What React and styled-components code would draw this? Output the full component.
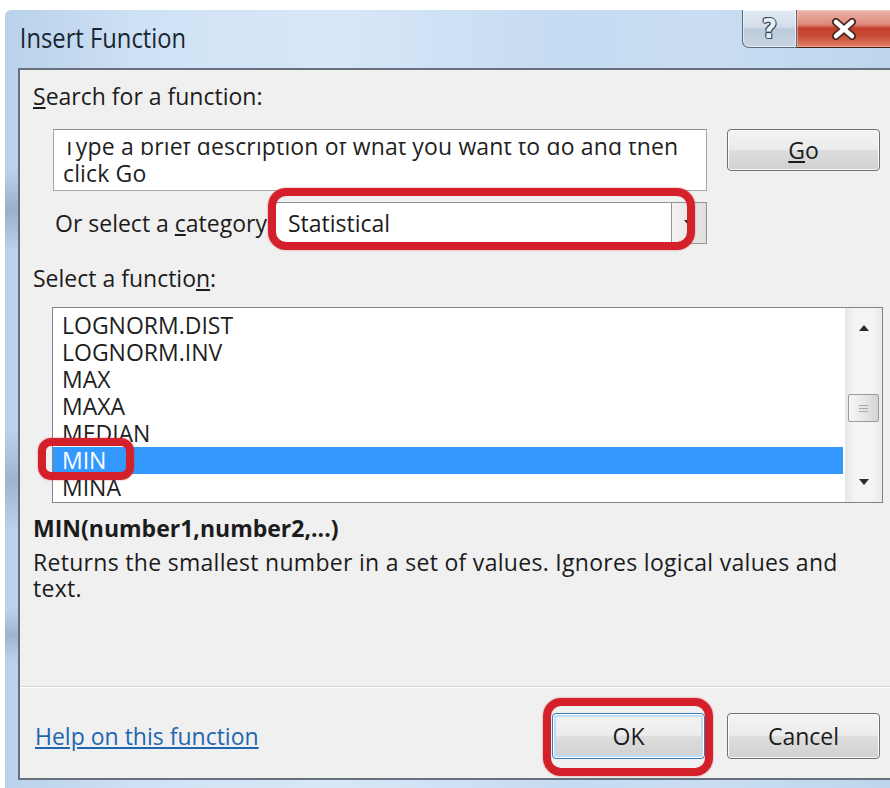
import React from "react";
import styled, { createGlobalStyle } from "styled-components";

const GlobalStyle = createGlobalStyle`
  html, body {
    margin: 0;
    padding: 0;
    background: #ffffff;
  }
  body {
    width: 890px;
    height: 788px;
    overflow: hidden;
  }
`;

const Screen = styled.div`
  width: 890px;
  height: 788px;
  overflow: hidden;
  box-sizing: border-box;
  padding: 10px 0 0 5px;
  background: #ffffff;
  font-family: "Open Sans", "Noto Sans", sans-serif;
  font-size: 23px;
  color: #1c1c1c;
`;

/* Aero glass frame around the dialog */
const Window = styled.div`
  width: 910px;
  height: 778px;
  box-sizing: border-box;
  padding: 0 13px 8px 13px;
  display: flex;
  flex-direction: column;
  border-radius: 6px 6px 0 0;
  background:
    linear-gradient(
      to bottom,
      rgba(90, 115, 145, 0) 0px,
      rgba(90, 115, 145, 0) 160px,
      rgba(90, 115, 145, 0.35) 200px,
      rgba(90, 115, 145, 0) 240px,
      rgba(90, 115, 145, 0) 420px,
      rgba(90, 115, 145, 0.3) 470px,
      rgba(90, 115, 145, 0) 520px,
      rgba(90, 115, 145, 0) 600px,
      rgba(90, 115, 145, 0.3) 625px,
      rgba(90, 115, 145, 0) 650px
    ),
    linear-gradient(
      to right,
      #b9d1ea 0px,
      #cfe2f5 140px,
      #d7e7f7 330px,
      #c5dbf1 560px,
      #c9def3 700px,
      #bcd4ec 100%
    );
`;

const TitleBar = styled.div`
  height: 58px;
  flex: none;
  display: flex;
  align-items: flex-start;
`;

const Title = styled.div`
  flex: 1;
  padding: 13px 0 0 2px;
  font-size: 27px;
  line-height: 30px;
  color: #1b2633;
  transform: scaleX(0.88);
  transform-origin: left center;
`;

const CaptionButtons = styled.div`
  display: flex;
  margin-right: 5px;
  height: 38px;
`;

const HelpCaption = styled.div`
  width: 55px;
  height: 38px;
  box-sizing: border-box;
  border: 1px solid #5b6b7e;
  border-top: none;
  border-radius: 0 0 0 7px;
  background: linear-gradient(
    to bottom,
    #e3ebf4 0%,
    #d2dde9 45%,
    #bccbdc 52%,
    #c6d3e2 100%
  );
  box-shadow: inset 0 0 0 1px rgba(255, 255, 255, 0.55);
  display: flex;
  align-items: center;
  justify-content: center;
  font-family: "DejaVu Sans", sans-serif;
  font-weight: bold;
  font-size: 26px;
  line-height: 1;
  color: #e9eff6;
  text-shadow:
    1px 0 0 #3a4a5c,
    -1px 0 0 #3a4a5c,
    0 1px 0 #3a4a5c,
    0 -1px 0 #3a4a5c,
    1px 1px 0 #3a4a5c,
    -1px -1px 0 #3a4a5c;
`;

const CloseCaption = styled.div`
  width: 100px;
  height: 38px;
  box-sizing: border-box;
  border: 1px solid #4a1a14;
  border-top: none;
  border-left: none;
  background: linear-gradient(
    to bottom,
    #eab4a8 0%,
    #de8c7c 38%,
    #c43f2a 50%,
    #c84a33 68%,
    #df8068 100%
  );
  box-shadow: inset 0 0 0 1px rgba(255, 220, 210, 0.45);
  display: flex;
  align-items: center;
  justify-content: center;
  padding-right: 6px;
`;

const Panel = styled.div`
  flex: 1;
  display: flex;
  flex-direction: column;
  border: 2px solid #66717d;
  background: #f0f0f0;
`;

const Content = styled.div`
  flex: 1;
  display: flex;
  flex-direction: column;
  padding: 12px 20px 0 13px;
`;

const Label = styled.div`
  line-height: 28px;
  height: 28px;
  margin-top: ${(p) => p.$top || 0}px;
  white-space: nowrap;
`;

const SearchRow = styled.div`
  display: flex;
  align-items: flex-start;
  gap: 20px;
  margin: 19px 0 0 20px;
`;

const SearchBox = styled.div`
  width: 655px;
  height: 62px;
  box-sizing: border-box;
  border: 1px solid #a3a7ad;
  border-top-color: #8d9196;
  background: #ffffff;
  padding: 12px 0 0 9px;
`;

/* the edit control is scrolled a little, so the first line loses its top */
const SearchViewport = styled.div`
  height: 48px;
  overflow: hidden;
`;

const SearchText = styled.div`
  margin-top: -9px;
  line-height: 27px;
  color: #1f1f1f;
  white-space: nowrap;
  letter-spacing: 0.15px;
`;

const PushButton = styled.button`
  width: 153px;
  height: ${(p) => p.$h || 46}px;
  box-sizing: border-box;
  border: 1px solid ${(p) => (p.$default ? "#3d7bad" : "#707070")};
  border-radius: 4px;
  background: linear-gradient(
    to bottom,
    #f3f3f3 0%,
    #ececec 48%,
    #dddddd 52%,
    #d0d0d0 100%
  );
  box-shadow: ${(p) =>
    p.$default
      ? "inset 0 0 0 1px #ffffff, inset 0 0 0 3px #b9def6"
      : "inset 0 0 0 1px rgba(255,255,255,0.85)"};
  font-family: inherit;
  font-size: 23px;
  color: #1c1c1c;
  padding: 0;
  display: flex;
  align-items: center;
  justify-content: center;
`;

const CategoryRow = styled.div`
  display: flex;
  align-items: center;
  height: 42px;
  margin: 11px 0 0 22px;
`;

const CategoryLabel = styled.div`
  width: 220px;
  white-space: nowrap;
`;

const Marked = styled.div`
  position: relative;
`;

/* hand-drawn red annotation ring */
const Ring = styled.div`
  position: absolute;
  top: ${(p) => p.$top}px;
  left: ${(p) => p.$left}px;
  width: ${(p) => p.$w}px;
  height: ${(p) => p.$h}px;
  box-sizing: border-box;
  border: 8px solid #d3202a;
  border-radius: ${(p) => p.$r || 16}px;
  pointer-events: none;
  box-shadow: 0 0 2px rgba(211, 32, 42, 0.6);
  z-index: 2;
`;

const Select = styled.div`
  width: 432px;
  height: 42px;
  box-sizing: border-box;
  border: 1px solid #8f959c;
  background: #ffffff;
  display: flex;
`;

const SelectValue = styled.div`
  flex: 1;
  padding-left: 12px;
  line-height: 40px;
`;

const DropButton = styled.div`
  width: 35px;
  box-sizing: border-box;
  border-left: 1px solid #8f959c;
  background: linear-gradient(to right, #f3f3f3, #dedede);
  display: flex;
  align-items: center;
  justify-content: center;
`;

const ListFrame = styled.div`
  position: relative;
  margin: 15px 0 0 19px;
  width: 831px;
`;

const ListBox = styled.div`
  height: 196px;
  box-sizing: border-box;
  border: 1px solid #7e858d;
  background: #ffffff;
  display: flex;
  overflow: hidden;
`;

const Items = styled.div`
  flex: 1;
  padding-top: 4px;
  overflow: hidden;
`;

const Item = styled.div`
  height: 27px;
  line-height: 27px;
  padding-left: 9px;
  margin-right: 2px;
  color: ${(p) => (p.$selected ? "#ffffff" : "#1e1e1e")};
  background: ${(p) => (p.$selected ? "#3399ff" : "transparent")};
`;

const ScrollBar = styled.div`
  width: 37px;
  display: flex;
  flex-direction: column;
  background: linear-gradient(to right, #e6e6e6, #f4f4f4 25%, #f4f4f4 75%, #e9e9e9);
`;

const ScrollArrow = styled.div`
  height: 40px;
  display: flex;
  align-items: center;
  justify-content: center;
`;

const ScrollTrack = styled.div`
  flex: 1;
`;

const Thumb = styled.div`
  margin: 46px auto 0;
  width: 31px;
  height: 28px;
  box-sizing: border-box;
  border: 1px solid #9b9b9b;
  border-radius: 2px;
  background: linear-gradient(to right, #f6f6f6, #e4e4e4 60%, #d4d4d4);
  display: flex;
  align-items: center;
  justify-content: center;
`;

const Grip = styled.div`
  width: 9px;
  height: 7px;
  background: repeating-linear-gradient(
    to bottom,
    #a9a9a9 0px,
    #a9a9a9 1px,
    transparent 1px,
    transparent 3px
  );
`;

const Signature = styled.div`
  margin-top: 11px;
  line-height: 28px;
  font-weight: bold;
`;

const Description = styled.div`
  margin-top: 7px;
  width: 835px;
  line-height: 26px;
  letter-spacing: 0.3px;
`;

const Spacer = styled.div`
  flex: 1;
`;

const Separator = styled.div`
  height: 1px;
  background: #d5d5d5;
  border-bottom: 1px solid #ffffff;
  margin: 0 -20px 0 -13px;
`;

const Footer = styled.div`
  height: 90px;
  box-sizing: border-box;
  padding-top: 6px;
  display: flex;
  align-items: center;
`;

const HelpLink = styled.a`
  margin-left: 2px;
  color: #1f66b0;
  text-decoration: underline;
  cursor: pointer;
`;

const ButtonGroup = styled.div`
  margin-left: auto;
  display: flex;
  gap: 22px;
`;

const functions = ["LOGNORM.DIST", "LOGNORM.INV", "MAX", "MAXA", "MEDIAN", "MIN", "MINA"];

const Triangle = ({ down }) => (
  <svg width="10" height="6" viewBox="0 0 10 6">
    <path d={down ? "M0 0 L10 0 L5 6 Z" : "M0 6 L10 6 L5 0 Z"} fill="#2a2a2a" />
  </svg>
);

export default function App() {
  return (
    <>
      <GlobalStyle />
      <Screen>
        <Window>
          <TitleBar>
            <Title>Insert Function</Title>
            <CaptionButtons>
              <HelpCaption>?</HelpCaption>
              <CloseCaption>
                <svg width="26" height="22" viewBox="0 0 26 22">
                  <path d="M5 4 L21 18 M21 4 L5 18" stroke="#4a2a24" strokeWidth="8" strokeLinecap="round" />
                  <path d="M5 4 L21 18 M21 4 L5 18" stroke="#ffffff" strokeWidth="4.5" strokeLinecap="round" />
                </svg>
              </CloseCaption>
            </CaptionButtons>
          </TitleBar>

          <Panel>
            <Content>
              <Label>
                <u>S</u>earch for a function:
              </Label>

              <SearchRow>
                <SearchBox>
                  <SearchViewport>
                    <SearchText>
                      Type a brief description of what you want to do and then
                      <br />
                      click Go
                    </SearchText>
                  </SearchViewport>
                </SearchBox>
                <PushButton $h={42}>
                  <u>G</u>o
                </PushButton>
              </SearchRow>

              <CategoryRow>
                <CategoryLabel>
                  Or select a <u>c</u>ategory:
                </CategoryLabel>
                <Marked>
                  <Select>
                    <SelectValue>Statistical</SelectValue>
                    <DropButton>
                      <Triangle down />
                    </DropButton>
                  </Select>
                  <Ring $top={-14} $left={-7} $w={427} $h={62} $r={18} />
                </Marked>
              </CategoryRow>

              <Label $top={20}>
                Select a functio<u>n</u>:
              </Label>

              <ListFrame>
                <ListBox>
                  <Items>
                    {functions.map((name) => (
                      <Item key={name} $selected={name === "MIN"}>
                        {name}
                      </Item>
                    ))}
                  </Items>
                  <ScrollBar>
                    <ScrollArrow>
                      <Triangle />
                    </ScrollArrow>
                    <ScrollTrack>
                      <Thumb>
                        <Grip />
                      </Thumb>
                    </ScrollTrack>
                    <ScrollArrow>
                      <Triangle down />
                    </ScrollArrow>
                  </ScrollBar>
                </ListBox>
                <Ring $top={131} $left={-14} $w={96} $h={42} $r={13} />
              </ListFrame>

              <Signature>MIN(number1,number2,...)</Signature>
              <Description>
                Returns the smallest number in a set of values. Ignores logical values and text.
              </Description>

              <Spacer />
              <Separator />

              <Footer>
                <HelpLink>Help on this function</HelpLink>
                <ButtonGroup>
                  <Marked>
                    <PushButton $default>OK</PushButton>
                    <Ring $top={-15} $left={-9} $w={170} $h={78} $r={18} />
                  </Marked>
                  <PushButton>Cancel</PushButton>
                </ButtonGroup>
              </Footer>
            </Content>
          </Panel>
        </Window>
      </Screen>
    </>
  );
}
